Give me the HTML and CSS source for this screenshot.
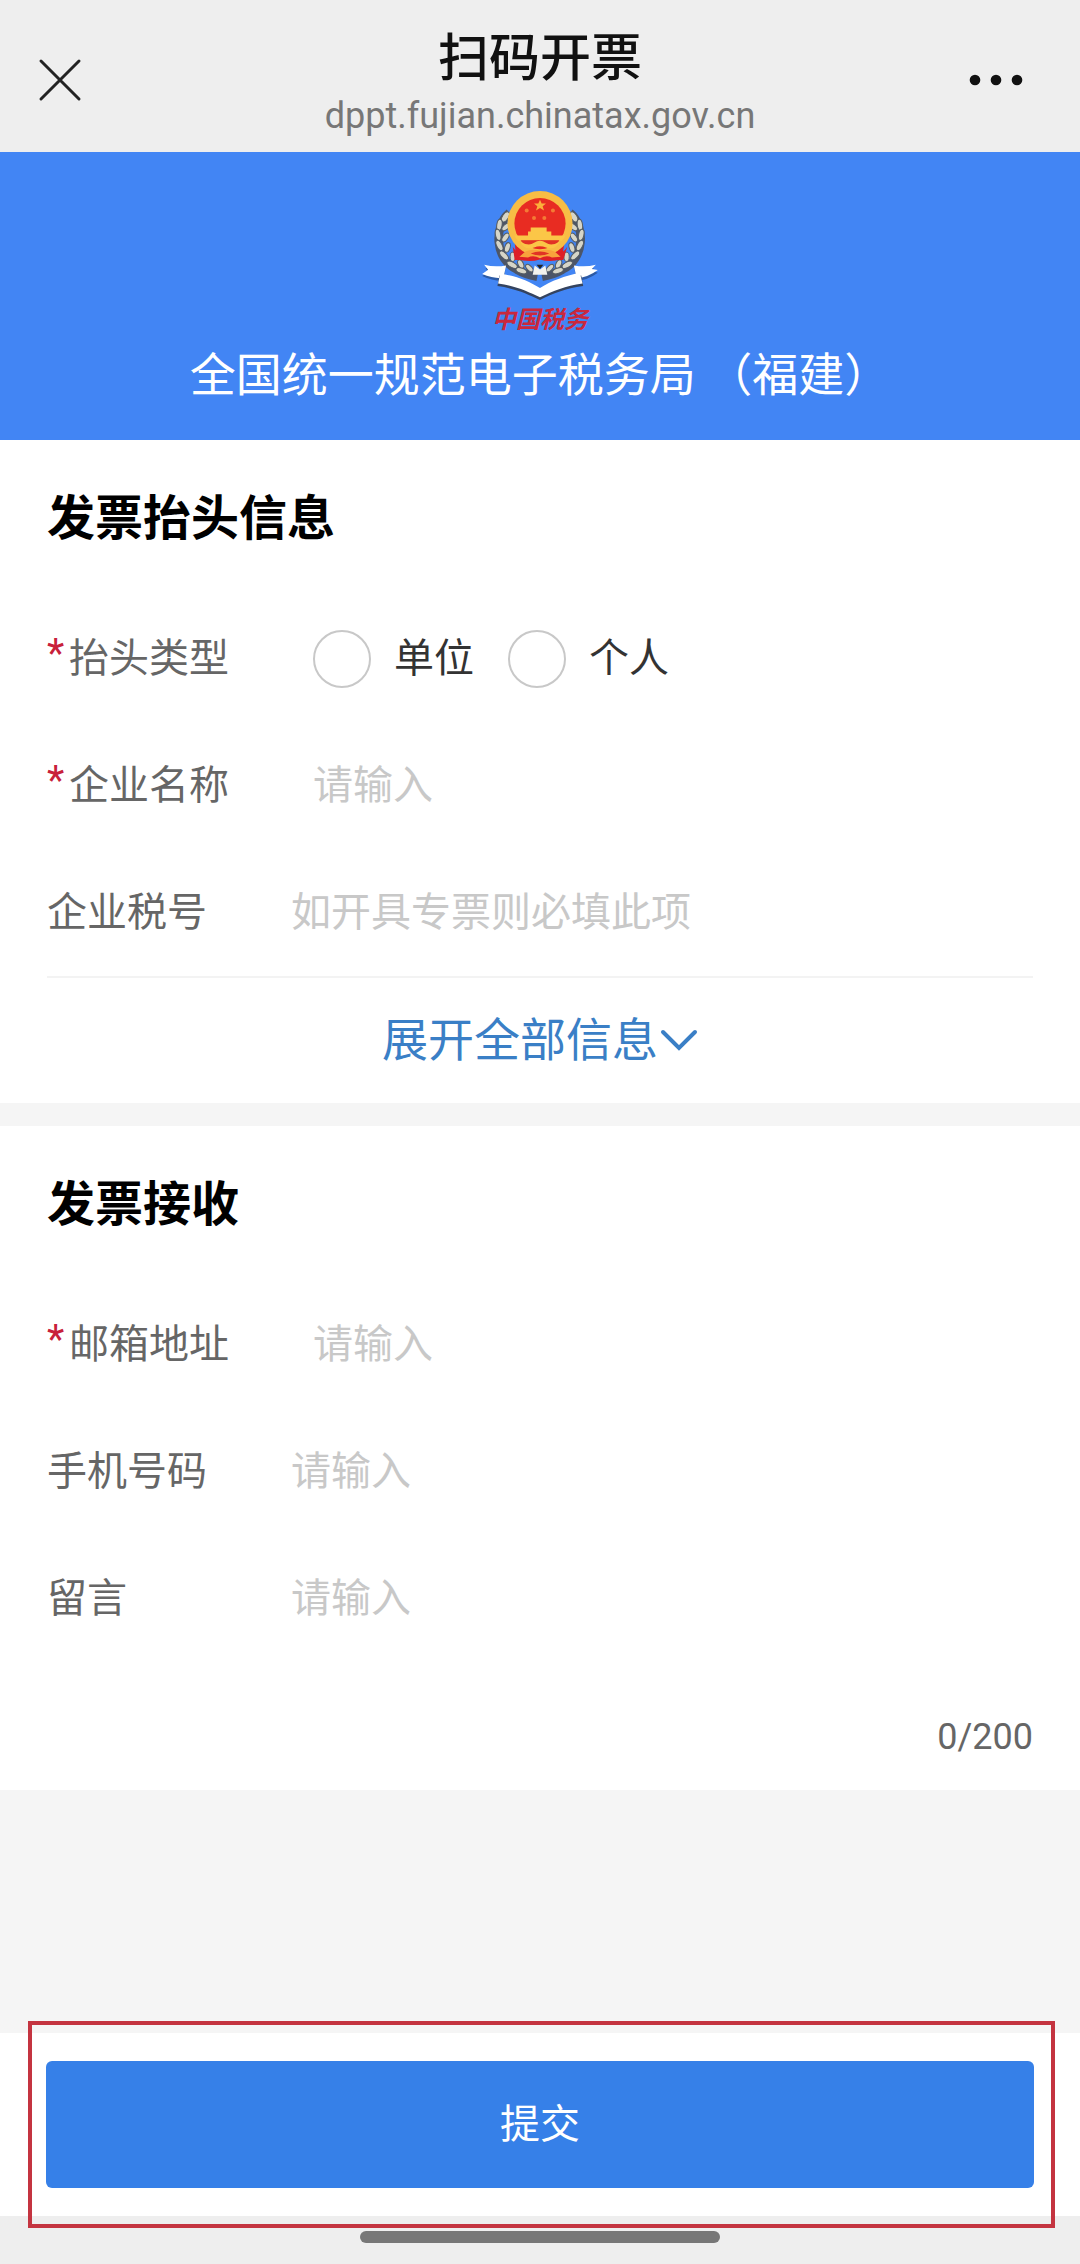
FILE: index.html
```html
<!DOCTYPE html>
<html lang="zh-CN">
<head>
<meta charset="utf-8">
<meta name="viewport" content="width=device-width">
<title>扫码开票</title>
<link rel="stylesheet" href="styles.css">
</head>
<body>
<header class="topbar">
  <button class="icon-button" type="button" aria-label="关闭">
    <svg width="44" height="44" viewBox="0 0 44 44" fill="none" stroke="#222" stroke-width="3" stroke-linecap="round"><path d="M3 3L41 41M41 3L3 41"/></svg>
  </button>
  <div class="topbar-text">
    <div class="topbar-title">扫码开票</div>
    <div class="topbar-url">dppt.fujian.chinatax.gov.cn</div>
  </div>
  <button class="icon-button icon-button-end" type="button" aria-label="更多">
    <svg width="56" height="12" viewBox="0 0 56 12" fill="#111"><circle cx="7" cy="6" r="5.3"/><circle cx="28" cy="6" r="5.3"/><circle cx="49" cy="6" r="5.3"/></svg>
  </button>
</header>

<div class="banner">
  <svg class="emblem" width="120" height="113" viewBox="60 55 360 340" aria-hidden="true">
    <!-- wheat wreath -->
    <g id="wreath">
      <path d="M148 130C100 170 104 270 170 300C190 312 212 318 232 322" fill="none" stroke="#4c5568" stroke-width="26"/>
      <g fill="#d6d5c8" stroke="#555c63" stroke-width="3">
        <ellipse cx="136" cy="142" rx="9" ry="17" transform="rotate(32 136 142)"/>
        <ellipse cx="118" cy="166" rx="8" ry="17" transform="rotate(8 118 166)"/>
        <ellipse cx="138" cy="172" rx="8" ry="15" transform="rotate(50 138 172)"/>
        <ellipse cx="114" cy="196" rx="8" ry="17" transform="rotate(-12 114 196)"/>
        <ellipse cx="136" cy="204" rx="8" ry="15" transform="rotate(35 136 204)"/>
        <ellipse cx="118" cy="228" rx="8" ry="17" transform="rotate(-28 118 228)"/>
        <ellipse cx="142" cy="234" rx="8" ry="15" transform="rotate(18 142 234)"/>
        <ellipse cx="132" cy="258" rx="8" ry="17" transform="rotate(-45 132 258)"/>
        <ellipse cx="158" cy="262" rx="8" ry="14" transform="rotate(0 158 262)"/>
        <ellipse cx="156" cy="286" rx="8" ry="17" transform="rotate(-62 156 286)"/>
        <ellipse cx="182" cy="284" rx="8" ry="14" transform="rotate(-25 182 284)"/>
        <ellipse cx="184" cy="304" rx="8" ry="17" transform="rotate(-72 184 304)"/>
        <ellipse cx="208" cy="296" rx="7" ry="14" transform="rotate(-45 208 296)"/>
      </g>
    </g>
    <use href="#wreath" transform="matrix(-1 0 0 1 478 0)"/>
    <!-- ribbon -->
    <path d="M76 296Q104 300 136 296L132 334Q98 336 66 320L84 308Z" fill="#2c5aa5"/>
    <path d="M402 296Q376 300 344 296L348 334Q382 334 414 310L396 304Z" fill="#2c5aa5"/>
    <path d="M72 286Q104 294 138 288L130 326Q98 328 66 314L84 301Z" fill="#fff"/>
    <path d="M408 286Q376 294 342 288L350 326Q382 326 414 302L396 299Z" fill="#fff"/>
    <path d="M118 318C168 326 206 342 240 364C274 342 314 326 364 318L370 350C316 358 280 372 240 392C202 374 168 358 112 350Z" fill="#34435f"/>
    <path d="M120 312C168 320 206 334 240 356C274 334 314 320 360 310L368 342C316 350 280 364 240 384C202 366 168 350 114 342Z" fill="#fff"/>
    <path d="M224 288L240 300L256 288L262 316H218Z" fill="#f3f3ee"/>
    <path d="M230 286H250L240 299Z" fill="#252525"/>
    <!-- national emblem -->
    <path d="M164 216Q178 232 240 236Q300 232 314 216L306 268Q272 280 240 270Q206 280 168 268Z" fill="#dd1f27"/>
    <circle cx="240" cy="162" r="98" fill="#f7bd45"/>
    <circle cx="240" cy="162" r="77" fill="#e82c22"/>
    <path d="M240 90l5 12h13l-10 8 4 13-12-8-12 8 4-13-10-8h13z" fill="#fbb03b"/>
    <g fill="#f47a35"><circle cx="200" cy="123" r="6"/><circle cx="279" cy="123" r="6"/><circle cx="222" cy="145" r="6"/><circle cx="253" cy="145" r="6"/></g>
    <path d="M212 174H260V186H274V198H316Q314 208 306 214H174Q166 208 164 198H204V186H212Z" fill="#fbc647"/>
    <path d="M182 212H298L284 232H196Z" fill="#e13325"/>
    <path d="M180 216Q206 232 222 220Q240 208 258 220Q274 232 300 216Q286 244 258 234Q240 226 222 234Q194 244 180 216Z" fill="#fbc647"/>
    <path d="M158 232Q172 256 198 250L190 272H164Z" fill="#dd1f27"/>
    <path d="M322 232Q308 256 282 250L290 272H310Z" fill="#dd1f27"/>
    <path d="M196 246Q218 236 240 244Q262 236 284 246L302 262L276 264Q260 256 240 266Q220 256 204 264L178 262Z" fill="#f8a33c"/>
    <path d="M212 252Q240 240 268 252Q240 264 212 252Z" fill="#e13325"/>
  </svg>
  <div class="emblem-caption">中国税务</div>
  <h1 class="banner-title">全国统一规范电子税务局 （福建）</h1>
</div>

<form class="form">
  <section class="card">
    <h2 class="card-title">发票抬头信息</h2>
    <div class="row" role="radiogroup" aria-labelledby="type-label">
      <span class="label required" id="type-label">抬头类型</span>
      <div class="options">
        <label class="option"><input class="radio" type="radio" name="type" value="unit"><span class="option-text">单位</span></label>
        <label class="option"><input class="radio" type="radio" name="type" value="person"><span class="option-text">个人</span></label>
      </div>
    </div>
    <div class="row">
      <label class="label required" for="company">企业名称</label>
      <input class="field" id="company" type="text" placeholder="请输入">
    </div>
    <div class="row">
      <label class="label" for="taxno">企业税号</label>
      <input class="field" id="taxno" type="text" placeholder="如开具专票则必填此项">
    </div>
    <button class="expand" type="button"><span class="expand-text">展开全部信息</span><svg width="40" height="24" viewBox="0 0 40 24" fill="none" stroke="#3a7fc6" stroke-width="4" stroke-linecap="round"><path d="M5 3L21 19L37 3"/></svg></button>
  </section>

  <section class="card card-receive">
    <h2 class="card-title">发票接收</h2>
    <div class="row">
      <label class="label required" for="email">邮箱地址</label>
      <input class="field" id="email" type="email" placeholder="请输入">
    </div>
    <div class="row">
      <label class="label" for="phone">手机号码</label>
      <input class="field" id="phone" type="tel" placeholder="请输入">
    </div>
    <div class="row">
      <label class="label" for="message">留言</label>
      <input class="field" id="message" type="text" maxlength="200" placeholder="请输入">
    </div>
    <div class="counter">0/200</div>
  </section>

  <div class="submit-bar">
    <button class="submit" type="submit">提交</button>
    <div class="highlight"></div>
  </div>
</form>

<footer class="home-area"><div class="home-indicator"></div></footer>
</body>
</html>
```
FILE: styles.css
```css
* {
  box-sizing: border-box;
}

body {
  margin: 0;
  min-height: 100vh;
  display: flex;
  flex-direction: column;
  background: #f5f5f5;
  color: #333;
  font-family: Roboto, "Noto Sans CJK SC", sans-serif;
  font-size: 40px;
}

button,
input {
  font: inherit;
  border: 0;
  padding: 0;
  background: none;
}

h1,
h2 {
  margin: 0;
}

.topbar {
  display: grid;
  grid-template-columns: 120px 1fr 120px;
  align-items: center;
  height: 152px;
  padding: 8px 38px 0;
  background: #eee;
}

.icon-button {
  display: flex;
}

.icon-button-end {
  justify-self: end;
  padding-right: 18px;
}

.topbar-text {
  padding-top: 6px;
  text-align: center;
}

.topbar-title {
  font-size: 51px;
  font-weight: 500;
  line-height: 66px;
  color: #111;
}

.topbar-url {
  font-size: 36px;
  line-height: 48px;
  color: #777;
}

.banner {
  display: flex;
  flex-direction: column;
  align-items: center;
  padding: 36px 0;
  background: #4285f4;
}

.emblem-caption {
  font-size: 24px;
  font-style: italic;
  font-weight: 700;
  line-height: 38px;
  color: #c9283e;
}

.banner-title {
  font-size: 46px;
  font-weight: 400;
  line-height: 65px;
  color: #fff;
  font-family: "Noto Sans CJK SC", sans-serif;
}

.form {
  flex: 1;
  display: flex;
  flex-direction: column;
}

.card {
  padding: 0 47px;
  background: #fff;
}

.card-receive {
  margin-top: 23px;
}

.card-title {
  padding: 43px 0 41px;
  font-size: 48px;
  font-weight: 700;
  line-height: 71px;
  color: #000;
}

.row {
  display: flex;
  align-items: center;
  gap: 84px;
  height: 127px;
}

.label {
  display: flex;
  flex: none;
  min-width: 160px;
  padding-bottom: 8px;
  color: #666;
}

.required::before {
  content: "*";
  width: 22px;
  padding-top: 4px;
  color: #c8203a;
}

.options {
  display: flex;
  gap: 34px;
}

.option {
  display: flex;
  align-items: center;
  gap: 23px;
}

.option-text {
  padding-bottom: 8px;
}

.radio {
  appearance: none;
  width: 58px;
  height: 58px;
  margin: 0;
  border: 2px solid #c8c8c8;
  border-radius: 50%;
}

.radio:checked {
  border: 16px solid #3680e8;
}

.field {
  flex: 1;
  min-width: 0;
  height: 64px;
  color: #333;
  outline: 0;
}

.field::placeholder {
  color: #c8c8c8;
  opacity: 1;
}

.expand {
  display: flex;
  align-items: center;
  justify-content: center;
  width: 100%;
  height: 127px;
  border-top: 2px solid #f3f3f3;
  font-size: 46px;
  color: #3a7fc6;
}

.expand-text {
  padding-bottom: 10px;
}

.counter {
  padding: 54px 0 32px;
  font-size: 36px;
  line-height: 42px;
  text-align: right;
  color: #666;
}

.submit-bar {
  position: relative;
  margin-top: auto;
  padding: 28px 46px;
  background: #fff;
}

.submit {
  display: block;
  width: 100%;
  height: 127px;
  padding-bottom: 8px;
  border-radius: 6px;
  background: #3680e8;
  color: #fff;
}

.highlight {
  position: absolute;
  inset: -12px 25px -12px 28px;
  border: 4px solid #c43440;
  pointer-events: none;
}

.home-area {
  display: flex;
  justify-content: center;
  padding: 15px 0 21px;
  background: #eee;
}

.home-indicator {
  width: 33.33%;
  height: 12px;
  border-radius: 6px;
  background: #777;
}
```
